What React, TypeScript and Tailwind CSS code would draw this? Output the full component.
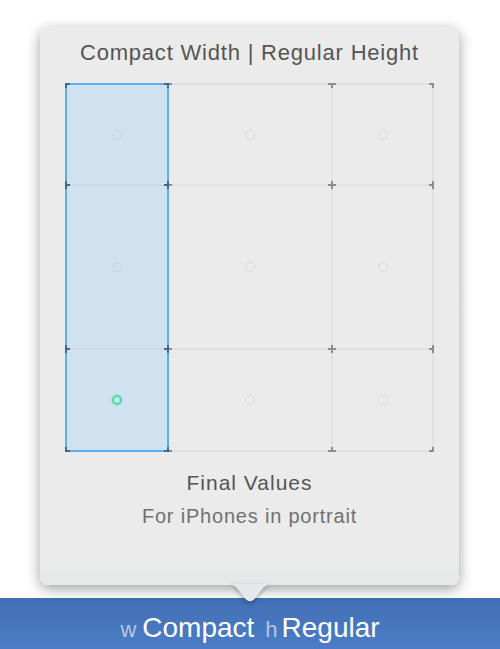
import React from "react";

const colW = ["w-[100px]", "w-[162px]", "w-[99px]"];
const rowH = ["h-[99px]", "h-[162px]", "h-[100px]"];

// grid line positions inside the 369px canvas
const xs = [1, 103, 267, 368];
const ys = [1, 102, 266, 368];

function Ticks() {
  const bars: React.ReactElement[] = [];
  xs.forEach((x, xi) => {
    ys.forEach((y, yi) => {
      const inBlue = xi < 2;
      const dark = "#3f6a8f";
      const grey = "#8d8d8d";
      // horizontal arms
      if (xi > 0)
        bars.push(
          <rect key={`l${xi}${yi}`} x={x - 4} y={y - 1} width={4} height={2} fill={xi === 1 ? dark : grey} />,
        );
      if (xi < 3)
        bars.push(
          <rect key={`r${xi}${yi}`} x={x} y={y - 1} width={4} height={2} fill={xi === 0 ? dark : grey} />,
        );
      // vertical arms
      if (yi > 0)
        bars.push(
          <rect key={`u${xi}${yi}`} x={x - 1} y={y - 4} width={2} height={4} fill={inBlue ? dark : grey} />,
        );
      if (yi < 3)
        bars.push(
          <rect key={`d${xi}${yi}`} x={x - 1} y={y} width={2} height={4} fill={inBlue ? dark : grey} />,
        );
      bars.push(
        <rect key={`c${xi}${yi}`} x={x - 1} y={y - 1} width={2} height={2} fill={inBlue ? dark : grey} />,
      );
    });
  });
  return (
    <svg className="absolute inset-0 z-20" width={369} height={369} viewBox="0 0 369 369">
      {bars}
    </svg>
  );
}

function SizeGrid() {
  return (
    <div className="relative mx-auto w-[369px] h-[369px]">
      <div className="flex flex-col gap-[2px] p-[2px] bg-[#e1e1e1] w-[369px] h-[369px]">
        {rowH.map((h, r) => (
          <div key={r} className={`flex gap-[2px] ${h}`}>
            {colW.map((w, c) => (
              <div key={c} className={`${w} h-full bg-[#ebebeb] flex items-center justify-center`}>
                {r === 2 && c === 0 ? (
                  <span className="relative z-10 block h-[10px] w-[10px] rounded-full border-2 border-[#3fe29c] shadow-[0_0_2px_rgba(63,226,156,0.6)]" />
                ) : (
                  <span className="block h-[10px] w-[10px] rounded-full border-[1.5px] border-[#d8d8d8]" />
                )}
              </div>
            ))}
          </div>
        ))}
      </div>
      <div className="absolute left-0 top-0 w-[104px] h-[369px] border-2 border-[#5cb0f2] bg-[rgba(145,202,252,0.3)]" />
      <Ticks />
    </div>
  );
}

export default function App() {
  return (
    <div
      className="w-[500px] h-[649px] bg-white flex flex-col pt-[27px] overflow-hidden"
      style={{ fontFamily: "'Liberation Sans', Arial, sans-serif" }}
    >
      <div className="relative z-10 ml-[40px] w-[419px] h-[558px] rounded-[8px] bg-gradient-to-b from-[#ebebeb] from-95% to-[#e4e8ea] shadow-[0_4px_14px_rgba(0,0,0,0.38)]">
        <div className="pt-[13px] text-center text-[22px] leading-[26px] tracking-[0.8px] text-[#555555] mb-[17px]">
          Compact Width | Regular Height
        </div>
        <SizeGrid />
        <div className="mt-[18px] text-center text-[21px] leading-[25px] tracking-[1px] text-[#555555]">
          Final Values
        </div>
        <div className="mt-[9px] text-center text-[20px] leading-[24px] tracking-[0.8px] text-[#707070]">
          For iPhones in portrait
        </div>
        <svg
          className="absolute left-[187px] bottom-[-18px]"
          width={46}
          height={19}
          viewBox="0 0 46 19"
          style={{ filter: "drop-shadow(0 2px 2px rgba(0,0,0,0.3))" }}
        >
          <path d="M0 0 L46 0 C38 0 36 4 30 12 C25 19 21 19 16 12 C10 4 8 0 0 0 Z" fill="#e4e8ea" />
        </svg>
      </div>
      <div className="mt-[13px] h-[51px] bg-gradient-to-b from-[#4270b6] to-[#4b7cc5] flex items-baseline justify-center pt-[9px]">
        <span className="text-[22px] text-[#b9c6dc] mr-[6px]">w</span>
        <span className="text-[28px] text-white mr-[11px]">Compact</span>
        <span className="text-[22px] text-[#b9c6dc] mr-[4px]">h</span>
        <span className="text-[28px] text-white">Regular</span>
      </div>
    </div>
  );
}
